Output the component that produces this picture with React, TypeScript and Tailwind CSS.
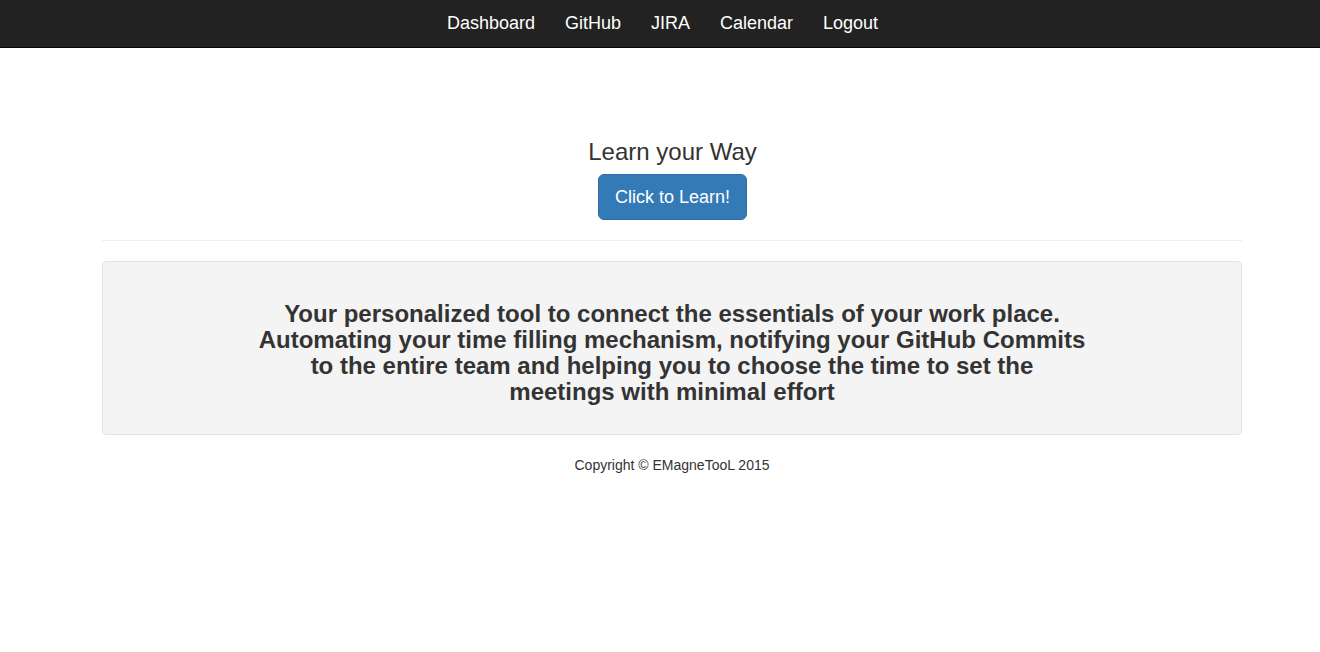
export default function App() {
  const links = ['Dashboard', 'GitHub', 'JIRA', 'Calendar', 'Logout']

  return (
    <div className="min-h-screen bg-white text-[#333] font-['Liberation_Sans',Arial,sans-serif]">
      <nav className="h-[48px] bg-[#222] border-b border-[#080808] flex justify-center items-center">
        <ul className="flex ml-[5px]">
          {links.map(l => (
            <li key={l}>
              <a href="#" className="block px-[15px] text-[18px] leading-[20px] text-white pb-[2px]">
                {l}
              </a>
            </li>
          ))}
        </ul>
      </nav>

      <div className="w-[1170px] ml-[87px] px-[15px]">
        <div className="pt-[91px] text-center">
          <h3 className="text-[24px] leading-[26.4px] mb-[10px] ml-[1px]">Learn your Way</h3>
          <button className="h-[46px] px-[16px] text-[18px] leading-[24px] text-white bg-[#337ab7] border border-[#2e6da4] rounded-[6px] mt-[-1px] ml-[1px]">
            Click to Learn!
          </button>
        </div>

        <hr className="mt-[20px] mb-[20px] border-t border-[#eee]" />

        <div className="bg-[#f4f4f4] border border-[#e3e3e3] rounded-[4px] p-[19px] mb-[20px]">
          <h3 className="mx-auto mt-[20px] mb-[10px] max-w-[830px] text-center text-[24px] leading-[26px] font-bold text-[#333]">
            Your personalized tool to connect the essentials of your work place. Automating your time filling mechanism, notifying your GitHub Commits to the entire team and helping you to choose the time to set the meetings with minimal effort
          </h3>
        </div>

        <p className="text-center text-[14px] leading-[20px]">Copyright © EMagneTooL 2015</p>
      </div>
    </div>
  )
}
